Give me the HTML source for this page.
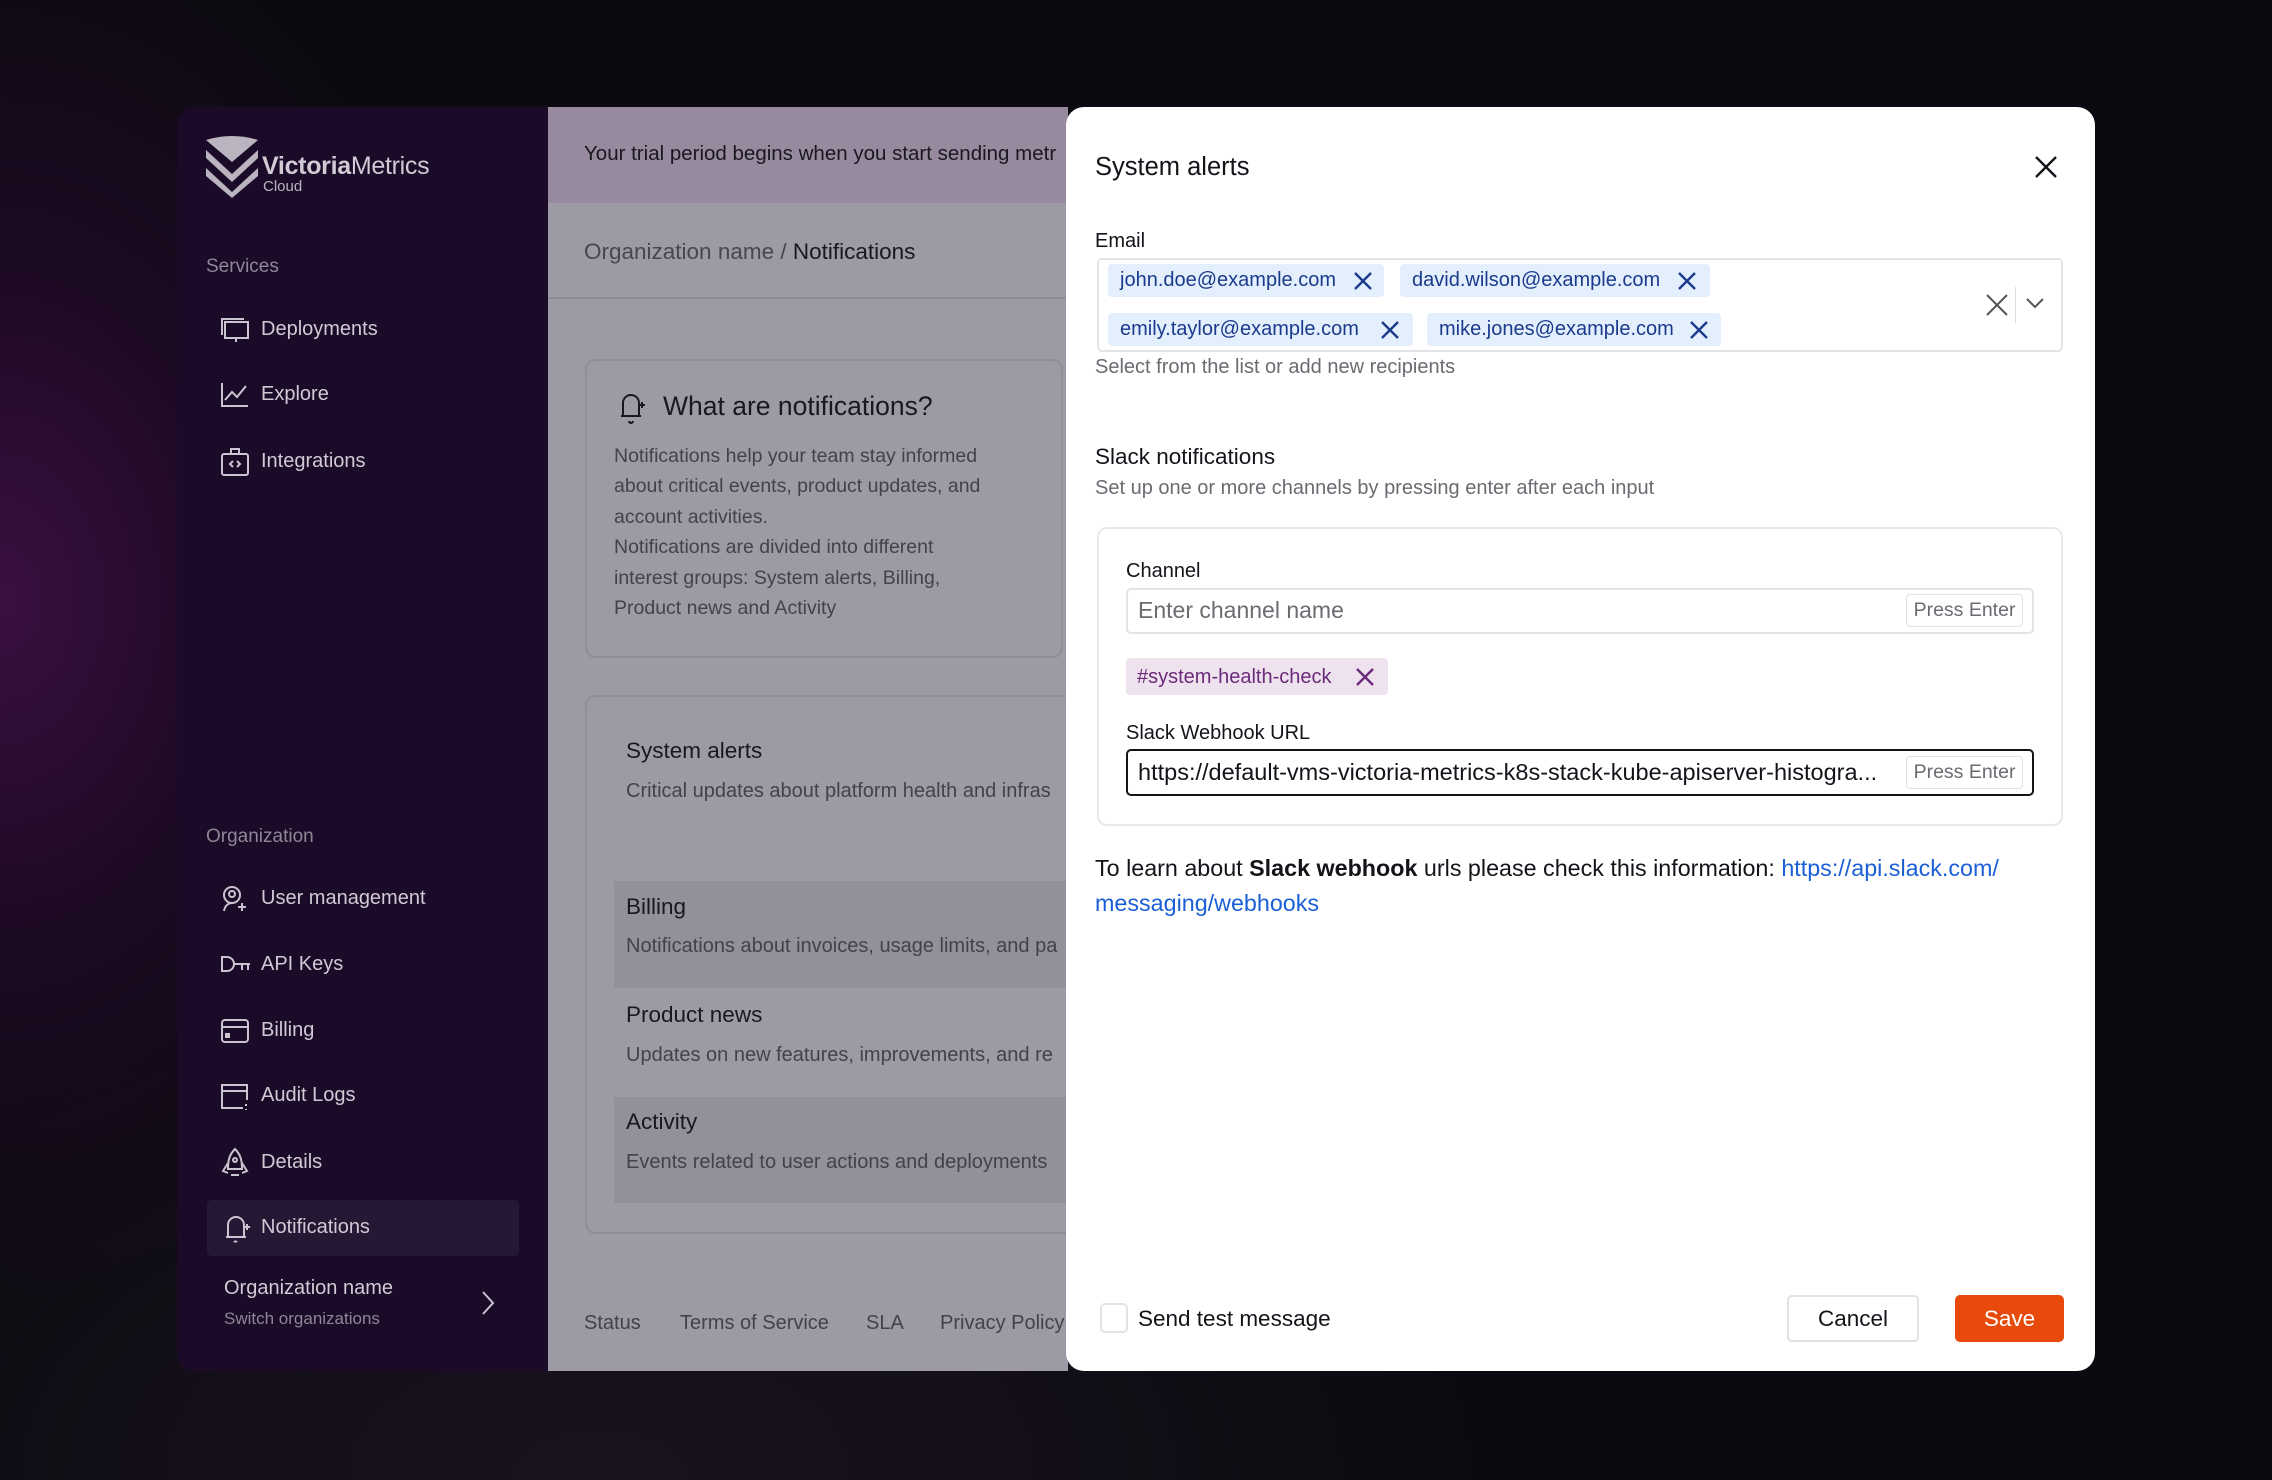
<!DOCTYPE html>
<html><head><meta charset="utf-8"><style>
*{margin:0;padding:0;box-sizing:border-box}
body{width:2272px;height:1480px;overflow:hidden;position:relative;font-family:"Liberation Sans",sans-serif;
background:radial-gradient(ellipse 500px 700px at 0px 600px,#3a1040 0%,#1e0a24 45%,rgba(12,10,16,0) 100%),radial-gradient(ellipse 900px 500px at 600px 1480px,#1a1320 0%,rgba(12,10,16,0) 100%),#0c0a10}
.t{position:absolute;white-space:nowrap;line-height:1.2}
#side{position:absolute;left:177px;top:107px;width:371px;height:1264px;background:#1c0b28;border-radius:18px 0 0 18px}
#main{position:absolute;left:548px;top:107px;width:520px;height:1264px;background:#9c9aa4}
#banner{position:absolute;left:548px;top:107px;width:520px;height:96px;background:#978a9f}
#modal{position:absolute;left:1066px;top:107px;width:1029px;height:1264px;background:#fff;border-radius:18px}
.ic{position:absolute;stroke:#c9c4cf;fill:none;stroke-width:2}
.side{color:#cfcad4;font-size:20px}
.chip{position:absolute;height:33px;background:#e3effd;border-radius:4px;color:#1b3a8c;font-size:20px;line-height:33px;padding-left:12px}
.x{position:absolute;stroke-width:2.4;fill:none}
</style></head><body>
<div id="side"></div>
<div id="main"></div>
<div id="banner"></div>
<svg class="ic" style="left:204px;top:136px;stroke:none" width="56" height="62" viewBox="0 0 56 62">
<path d="M2 4 Q28 -4 54 4 L28 26 Z" fill="#b9b4bf"/>
<path d="M2 14 L28 38 L54 14 L54 22 L28 46 L2 22Z" fill="#b9b4bf"/>
<path d="M2 32 L28 56 L54 32 L54 40 L28 62 L2 40Z" fill="#b9b4bf"/>
</svg>
<div class="t" style="left:262px;top:151px;font-size:25px;color:#cfcad4;letter-spacing:-0.3px"><b>Victoria</b>Metrics</div>
<div class="t" style="left:263px;top:178px;font-size:15px;color:#b9b4bf">Cloud</div>
<div class="t" style="left:206px;top:256px;font-size:19px;color:#8d8796">Services</div>
<svg class="ic" style="left:220px;top:317px" width="30" height="26"><rect x="5" y="5" width="23" height="16"/><path d="M2 18V2h22M16 21v4"/></svg>
<div class="t side" style="left:261px;top:317px">Deployments</div>
<svg class="ic" style="left:220px;top:382px" width="30" height="26"><path d="M2 1v23h26M5 18l7-8 5 5 9-11"/></svg>
<div class="t side" style="left:261px;top:382px">Explore</div>
<svg class="ic" style="left:220px;top:447px" width="30" height="30"><rect x="2" y="7" width="26" height="21" rx="2"/><path d="M11 7V2h8v5M13 14l-3 3 3 3M17 14l3 3-3 3"/></svg>
<div class="t side" style="left:261px;top:449px">Integrations</div>
<div class="t" style="left:206px;top:826px;font-size:19px;color:#8d8796">Organization</div>
<svg class="ic" style="left:220px;top:885px" width="30" height="28"><circle cx="12" cy="10" r="8"/><circle cx="12" cy="9" r="3"/><path d="M4 26c1-6 5-8 8-8M22 18v8M18 22h8"/></svg>
<div class="t side" style="left:261px;top:886px">User management</div>
<svg class="ic" style="left:220px;top:954px" width="32" height="20"><path d="M2 3h5a7 7 0 010 14H2zM14 10h16M22 10v6M28 10v6"/></svg>
<div class="t side" style="left:261px;top:952px">API Keys</div>
<svg class="ic" style="left:220px;top:1017px" width="30" height="28"><rect x="2" y="3" width="26" height="22" rx="3"/><path d="M2 10h26"/><rect x="6" y="17" width="3" height="3" fill="#c9c4cf"/></svg>
<div class="t side" style="left:261px;top:1018px">Billing</div>
<svg class="ic" style="left:220px;top:1082px" width="30" height="30"><path d="M27 18V3H2v23h21M2 9h25M26 22v2M26 27v1"/></svg>
<div class="t side" style="left:261px;top:1083px">Audit Logs</div>
<svg class="ic" style="left:220px;top:1147px" width="30" height="30"><path d="M15 2c-6 6-7 12-7 20h14c0-8-1-14-7-20zM8 16l-5 8 5 2M22 16l5 8-5 2M11 28h8"/><circle cx="15" cy="13" r="2"/></svg>
<div class="t side" style="left:261px;top:1150px">Details</div>
<div style="position:absolute;left:207px;top:1200px;width:312px;height:56px;background:#261834;border-radius:5px"></div>
<svg class="ic" style="left:222px;top:1213px" width="30" height="32"><path d="M4 24h20M6 24V12a8 8 0 0116 0v12M15 28a2 2 0 01-3 0M22 14h6M25 11v6"/></svg>
<div class="t side" style="left:261px;top:1215px">Notifications</div>
<div class="t" style="left:224px;top:1276px;font-size:20px;color:#cfcad4">Organization name</div>
<div class="t" style="left:224px;top:1309px;font-size:17px;color:#8d8796">Switch organizations</div>
<svg class="ic" style="left:480px;top:1290px" width="16" height="26"><path d="M3 2l10 11-10 11"/></svg>
<div class="t" style="left:584px;top:142px;font-size:20.5px;color:#1a1720">Your trial period begins when you start sending metr</div>
<div class="t" style="left:584px;top:238px;font-size:22.5px;color:#4a4650">Organization name / <span style="color:#1a1720">Notifications</span></div>
<div style="position:absolute;left:548px;top:297px;width:520px;height:2px;background:#8e8c96"></div>
<div style="position:absolute;left:585px;top:359px;width:478px;height:299px;border:2px solid #908e98;border-radius:10px"></div>
<svg class="ic" style="left:617px;top:390px;stroke:#1a1720" width="30" height="34"><path d="M4 26h20M6 26V13a8 8 0 0116 0v13M16 31a2 2 0 01-4 0M22 15h6M25 12v6"/></svg>
<div class="t" style="left:663px;top:391px;font-size:26.5px;color:#1a1720">What are notifications?</div>
<div class="t" style="left:614px;top:441px;font-size:19.5px;color:#45414c;line-height:30.4px">Notifications help your team stay informed<br>about critical events, product updates, and<br>account activities.<br>Notifications are divided into different<br>interest groups: System alerts, Billing,<br>Product news and Activity</div>
<div style="position:absolute;left:585px;top:695px;width:500px;height:539px;border:2px solid #908e98;border-radius:10px"></div>
<div class="t" style="left:626px;top:737px;font-size:22.5px;color:#1a1720">System alerts</div>
<div class="t" style="left:626px;top:779px;font-size:20px;color:#45414c">Critical updates about platform health and infras</div>
<div style="position:absolute;left:614px;top:881px;width:454px;height:107px;background:#92909a"></div>
<div class="t" style="left:626px;top:893px;font-size:22.5px;color:#1a1720">Billing</div>
<div class="t" style="left:626px;top:934px;font-size:20px;color:#45414c">Notifications about invoices, usage limits, and pa</div>
<div class="t" style="left:626px;top:1001px;font-size:22.5px;color:#1a1720">Product news</div>
<div class="t" style="left:626px;top:1043px;font-size:20px;color:#45414c">Updates on new features, improvements, and re</div>
<div style="position:absolute;left:614px;top:1097px;width:454px;height:106px;background:#92909a"></div>
<div class="t" style="left:626px;top:1108px;font-size:22.5px;color:#1a1720">Activity</div>
<div class="t" style="left:626px;top:1150px;font-size:20px;color:#45414c">Events related to user actions and deployments</div>
<div class="t" style="left:584px;top:1311px;font-size:20px;color:#45414c">Status</div>
<div class="t" style="left:680px;top:1311px;font-size:20px;color:#45414c">Terms of Service</div>
<div class="t" style="left:866px;top:1311px;font-size:20px;color:#45414c">SLA</div>
<div class="t" style="left:940px;top:1311px;font-size:20px;color:#45414c">Privacy Policy</div>
<div id="modal"></div>
<div class="t" style="left:1095px;top:152px;font-size:25.5px;color:#15131a">System alerts</div>
<svg class="x" style="left:2034px;top:155px;stroke:#15131a" width="24" height="24"><path d="M2 2l20 20M22 2L2 22"/></svg>
<div class="t" style="left:1095px;top:229px;font-size:20px;color:#15131a">Email</div>
<div style="position:absolute;left:1097px;top:258px;width:966px;height:94px;border:2px solid #e4e4e6;border-radius:5px"></div>
<div class="chip" style="left:1108px;top:264px;width:276px">john.doe@example.com</div>
<div class="chip" style="left:1400px;top:264px;width:310px">david.wilson@example.com</div>
<div class="chip" style="left:1108px;top:313px;width:305px">emily.taylor@example.com</div>
<div class="chip" style="left:1427px;top:313px;width:294px">mike.jones@example.com</div>
<svg class="x" style="left:1353px;top:271px;stroke:#1b3a8c" width="20" height="20"><path d="M2 2l16 16M18 2L2 18"/></svg>
<svg class="x" style="left:1677px;top:271px;stroke:#1b3a8c" width="20" height="20"><path d="M2 2l16 16M18 2L2 18"/></svg>
<svg class="x" style="left:1380px;top:320px;stroke:#1b3a8c" width="20" height="20"><path d="M2 2l16 16M18 2L2 18"/></svg>
<svg class="x" style="left:1689px;top:320px;stroke:#1b3a8c" width="20" height="20"><path d="M2 2l16 16M18 2L2 18"/></svg>
<svg class="x" style="left:1985px;top:293px;stroke:#555;stroke-width:2" width="24" height="24"><path d="M2 2l20 20M22 2L2 22"/></svg>
<div style="position:absolute;left:2015px;top:287px;width:1px;height:36px;background:#ddd"></div>
<svg class="x" style="left:2025px;top:297px;stroke:#555;stroke-width:2" width="20" height="14"><path d="M2 2l8 8 8-8"/></svg>
<div class="t" style="left:1095px;top:355px;font-size:20px;color:#6d6a72">Select from the list or add new recipients</div>
<div class="t" style="left:1095px;top:443px;font-size:22.5px;color:#15131a">Slack notifications</div>
<div class="t" style="left:1095px;top:476px;font-size:20px;color:#6d6a72">Set up one or more channels by pressing enter after each input</div>
<div style="position:absolute;left:1097px;top:527px;width:966px;height:299px;border:2px solid #e9e9eb;border-radius:10px"></div>
<div class="t" style="left:1126px;top:559px;font-size:20px;color:#15131a">Channel</div>
<div style="position:absolute;left:1126px;top:588px;width:908px;height:46px;border:2px solid #e4e4e6;border-radius:5px"></div>
<div class="t" style="left:1138px;top:597px;font-size:23px;color:#6d6a72">Enter channel name</div>
<div class="t" style="left:1906px;top:594px;width:117px;height:33px;border:1.5px solid #e2e2e4;border-radius:4px;font-size:19.5px;color:#6d6a72;line-height:30px;text-align:center">Press Enter</div>
<div style="position:absolute;left:1126px;top:658px;width:262px;height:37px;background:#ede2ee;border-radius:4px"></div>
<div class="t" style="left:1137px;top:665px;font-size:20px;color:#6b2a7a">#system-health-check</div>
<svg class="x" style="left:1355px;top:667px;stroke:#6b2a7a" width="20" height="20"><path d="M2 2l16 16M18 2L2 18"/></svg>
<div class="t" style="left:1126px;top:721px;font-size:20px;color:#15131a">Slack Webhook URL</div>
<div style="position:absolute;left:1126px;top:749px;width:908px;height:47px;border:2px solid #15131a;border-radius:5px"></div>
<div class="t" style="left:1138px;top:758px;font-size:23.5px;color:#15131a">https://default-vms-victoria-metrics-k8s-stack-kube-apiserver-histogra...</div>
<div class="t" style="left:1906px;top:756px;width:117px;height:33px;border:1.5px solid #e2e2e4;border-radius:4px;font-size:19.5px;color:#6d6a72;line-height:30px;text-align:center;background:#fff">Press Enter</div>
<div class="t" style="left:1095px;top:855px;font-size:23.3px;color:#15131a">To learn about <b>Slack webhook</b> urls please check this information: <span style="color:#1a5fd6">https://api.slack.com/</span></div>
<div class="t" style="left:1095px;top:890px;font-size:23.3px;color:#1a5fd6">messaging/webhooks</div>
<div style="position:absolute;left:1100px;top:1303px;width:28px;height:30px;border:2px solid #e2e2e4;border-radius:5px"></div>
<div class="t" style="left:1138px;top:1305px;font-size:22.5px;color:#15131a">Send test message</div>
<div class="t" style="left:1787px;top:1295px;width:132px;height:47px;border:2px solid #e2e2e4;border-radius:5px;font-size:22.5px;color:#15131a;line-height:43px;text-align:center">Cancel</div>
<div class="t" style="left:1955px;top:1295px;width:109px;height:47px;background:#e84a0c;border-radius:5px;font-size:22.5px;color:#fff;line-height:47px;text-align:center">Save</div>
</body></html>
